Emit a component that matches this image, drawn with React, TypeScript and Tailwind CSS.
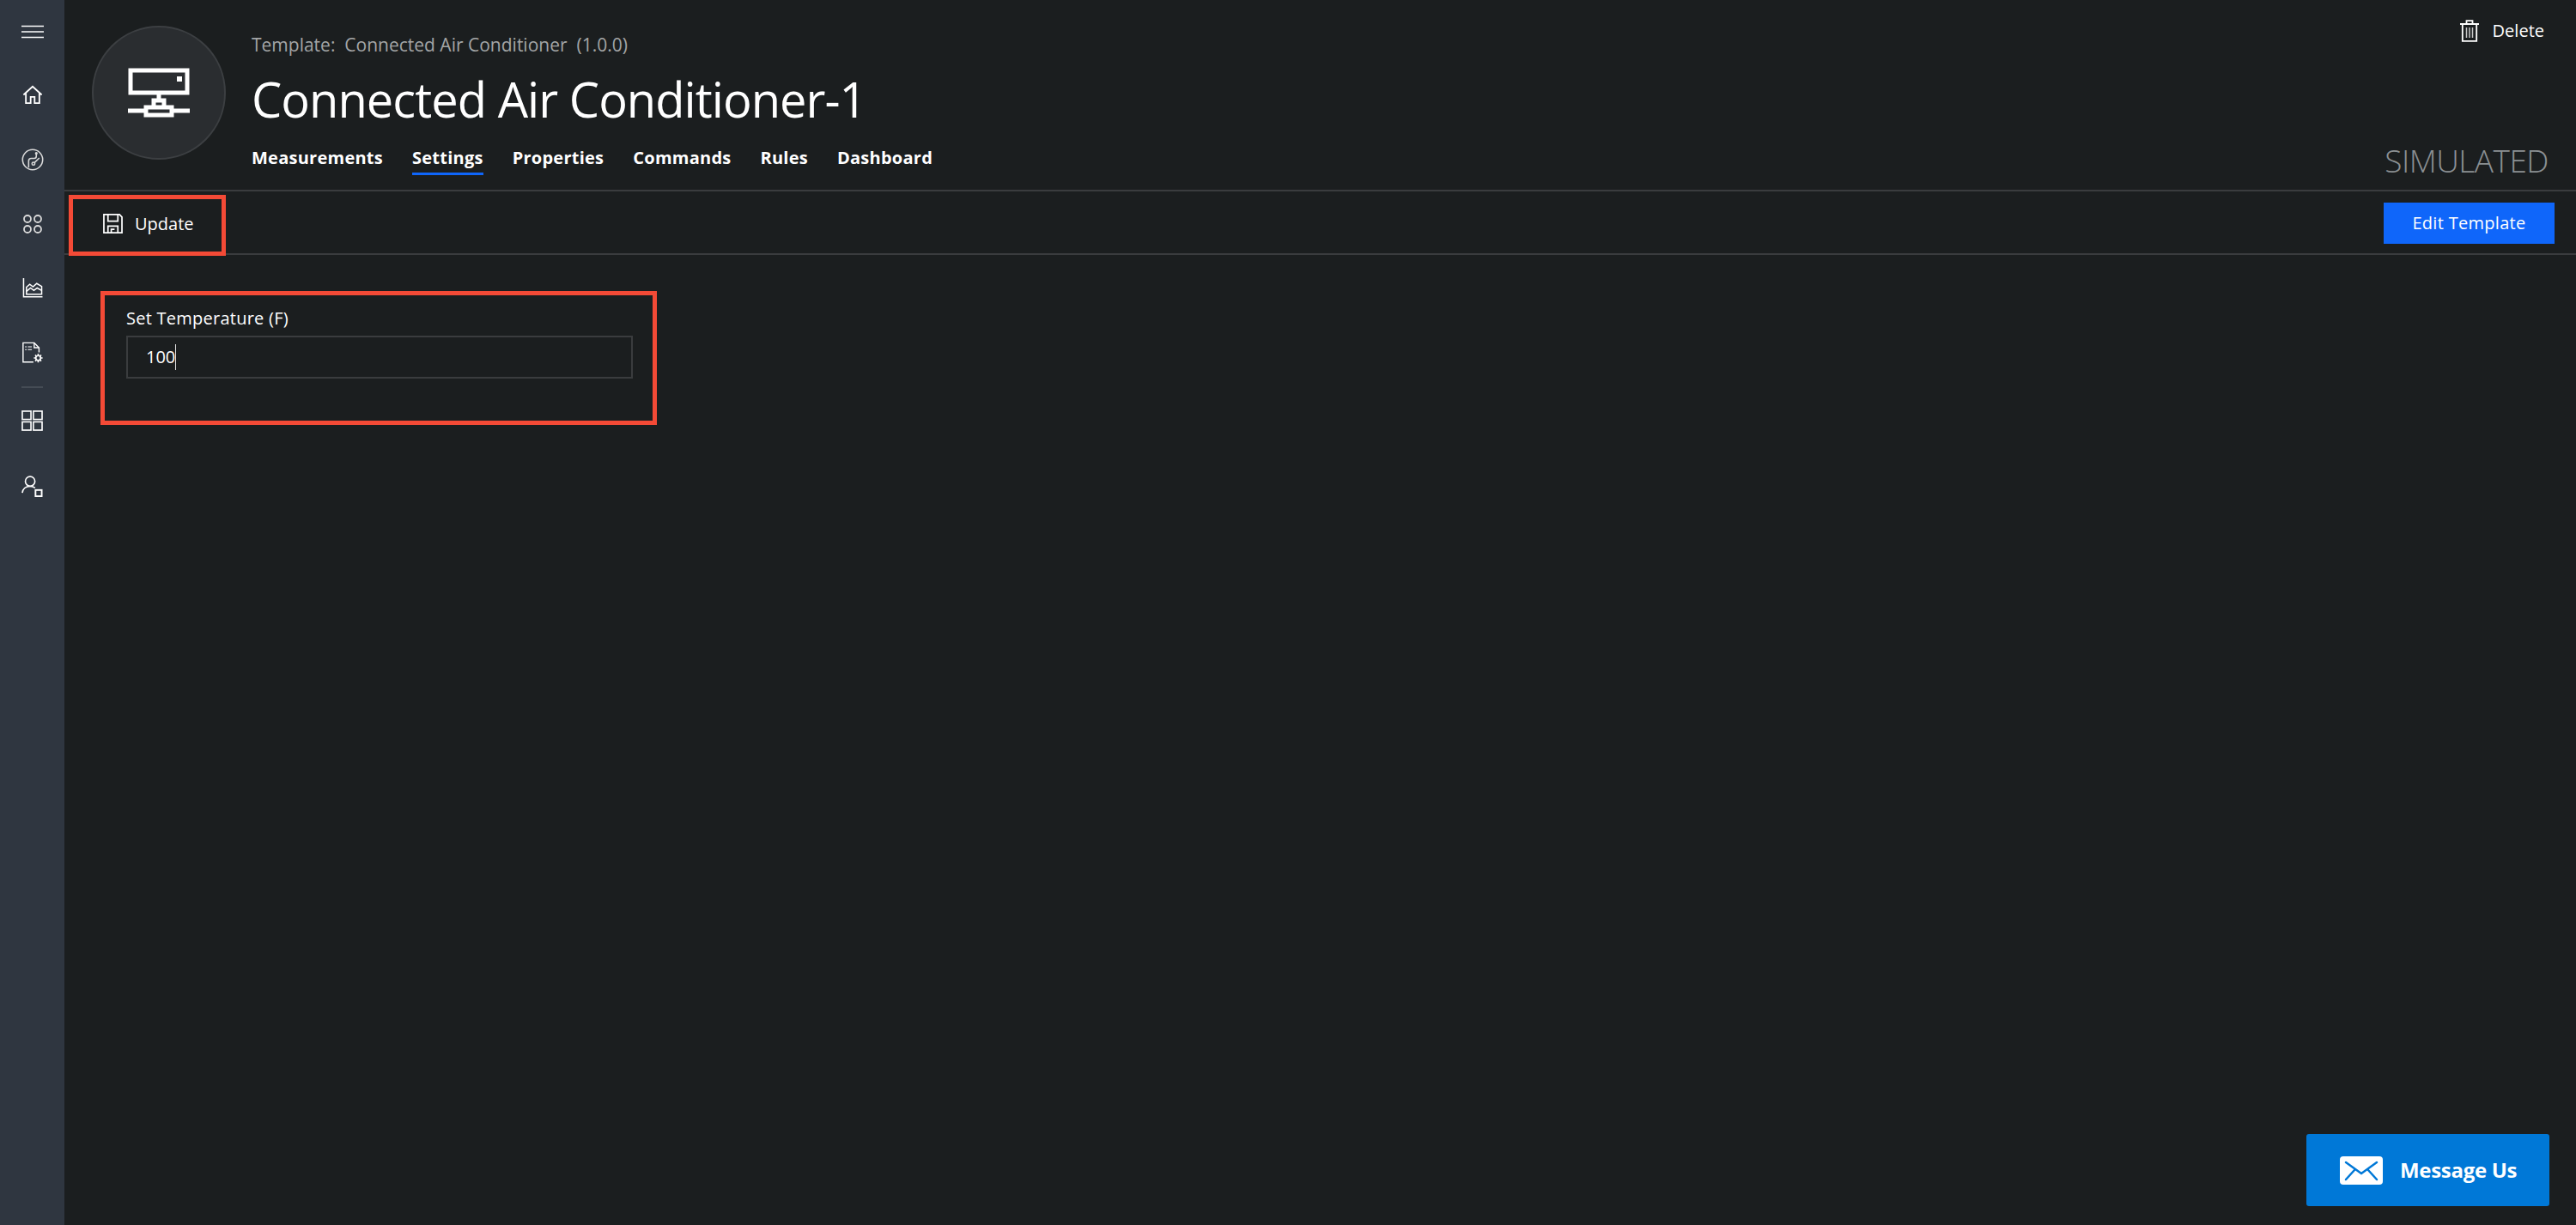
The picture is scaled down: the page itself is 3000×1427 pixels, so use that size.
import React from "react";

function Hamburger() {
  return (
    <svg width="28" height="16" viewBox="0 0 28 16" fill="none" stroke="#fff" strokeWidth="1.6">
      <path d="M1 1.500h26M1 8h26M1 14.500h26" />
    </svg>
  );
}
function HomeIcon() {
  return (
    <svg width="24" height="23" viewBox="0 0 26 24" fill="none" stroke="#fff" strokeWidth="2">
      <path d="M1.500 12 13 1.500 24.500 12M4.500 10v12.500h6v-8h5v8h6V10" />
    </svg>
  );
}
function CircuitIcon() {
  return (
    <svg width="26" height="26" viewBox="0 0 28 28" fill="none" stroke="#d9d9d9" strokeWidth="1.700">
      <circle cx="14" cy="14" r="12.600" />
      <path d="M9 24v-8.500c0-2 1.500-3.200 3.300-3.200H16c1.600 0 2.600-1 2.600-2.600V6" />
      <circle cx="15" cy="19" r="1.800" />
      <path d="m16.400 17.600 6-5.800" />
      <circle cx="18.600" cy="6" r=".9" />
    </svg>
  );
}
function AppsIcon() {
  return (
    <svg width="24" height="24" viewBox="0 0 24 24" fill="none" stroke="#d9d9d9" strokeWidth="1.800">
      <circle cx="6" cy="6" r="4" />
      <circle cx="18" cy="6" r="4" />
      <circle cx="6" cy="18" r="4" />
      <circle cx="18" cy="18" r="4" />
    </svg>
  );
}
function ChartIcon() {
  return (
    <svg width="24" height="23" viewBox="0 0 24 24" fill="none" stroke="#fff" strokeWidth="1.600">
      <path d="M1 0v22.800h23" />
      <path d="M4.500 19.500V11l4-3.500 4 3 4.500-4 6 3.500v9.500z" />
      <path d="m4.500 16 5-4 4 3 4-3 5.500 3" />
    </svg>
  );
}
function DocGearIcon() {
  return (
    <svg width="26" height="26" viewBox="0 0 28 27" fill="none" stroke="#fff" strokeWidth="1.500">
      <path d="M15 25H2V1h14l6 6v6" />
      <path d="M16 1v6h6" />
      <path d="M4.500 6h2M8 6h5M4.500 9.500h2M8 9.500h5" strokeWidth="1.200" />
      <circle cx="21" cy="20" r="3" strokeWidth="1.800" />
      <path d="M21 14.500v2M21 23.500v2M15.500 20h2M24.500 20h2M17.200 16.200l1.400 1.400M23.400 22.400l1.400 1.400M17.200 23.800l1.400-1.400M23.400 17.600l1.400-1.400" strokeWidth="1.800" />
    </svg>
  );
}
function GridIcon() {
  return (
    <svg width="25" height="24" viewBox="0 0 26 25" fill="none" stroke="#fff" strokeWidth="1.700">
      <rect x="1" y="1" width="10.500" height="10" />
      <rect x="14.500" y="1" width="10.500" height="10" />
      <rect x="1" y="14" width="10.500" height="10" />
      <rect x="14.500" y="14" width="10.500" height="10" />
    </svg>
  );
}
function UserIcon() {
  return (
    <svg width="25" height="25" viewBox="0 0 26 26" fill="none" stroke="#fff" strokeWidth="1.700">
      <circle cx="10.500" cy="7" r="5.800" />
      <path d="M1 21c.5-4.500 4-8 9.500-8 2.500 0 4.500.7 6 2" />
      <rect x="17" y="17.500" width="7.500" height="7.500" strokeWidth="2" />
    </svg>
  );
}
function DeviceIcon() {
  return (
    <svg width="72" height="58" viewBox="0 0 72 58" fill="none" stroke="#fff" strokeWidth="5">
      <rect x="3" y="3" width="66" height="26" />
      <rect x="57" y="10" width="6" height="6" fill="#fff" stroke="none" />
      <path d="M36 29v9M30 38h12v8H30zM30 46H21v9h30v-9h-9M0 50h21M51 50h21" />
    </svg>
  );
}
function SaveIcon() {
  return (
    <svg width="23" height="23" viewBox="0 0 24 24" fill="none" stroke="#fff" strokeWidth="1.800">
      <path d="M1 1h19l3 3v19H1z" />
      <path d="M6 1v8h12V1M6 23v-8h12v8" />
      <path d="M10 23v-4h4" />
    </svg>
  );
}
function TrashIcon() {
  return (
    <svg width="22" height="26" viewBox="0 0 22 26" fill="none" stroke="#fff" strokeWidth="1.800">
      <path d="M0 5h22M7.500 5V1.200h7V5M2.800 5v19.800h16.400V5" />
      <path d="M7.500 9v12M11 9v12M14.500 9v12" stroke="#c9c9c9" strokeWidth="1.500" />
    </svg>
  );
}
function MailIcon() {
  return (
    <svg width="50" height="33" viewBox="0 0 50 33" fill="none">
      <rect width="50" height="33" rx="4" fill="#fff" />
      <path d="m7 7 18 13L43 7M7 27l10-11M43 27 33 16" stroke="#0078d7" strokeWidth="2.500" strokeLinecap="round" />
    </svg>
  );
}

const sideTop = [<HomeIcon />, <CircuitIcon />, <AppsIcon />, <ChartIcon />, <DocGearIcon />];

const tabs = ["Measurements", "Settings", "Properties", "Commands", "Rules", "Dashboard"];

export default function App() {
  return (
    <div className="relative flex h-screen w-full overflow-hidden bg-[#1b1e1f] font-['Open_Sans','Noto_Sans',sans-serif] text-white">
      <aside className="flex w-[75px] shrink-0 flex-col items-center bg-[#2f3640]">
        <div className="flex h-[73px] w-full items-center justify-center">
          <Hamburger />
        </div>
        {sideTop.map((icon, i) => (
          <div key={i} className="flex h-[75px] w-full items-center justify-center">
            {icon}
          </div>
        ))}
        <div className="mt-[2px] h-[2px] w-[25px] bg-[#454c55]" />
        <div className="flex h-[76px] w-full items-center justify-center">
          <GridIcon />
        </div>
        <div className="flex h-[76px] w-full items-center justify-center">
          <UserIcon />
        </div>
      </aside>

      <main className="flex min-w-0 flex-1 flex-col">
        <header className="flex h-[223px] border-b-2 border-[#3a3c3e]">
          <div className="ml-[32px] mt-[30px] flex h-[156px] w-[156px] shrink-0 items-center justify-center rounded-full border-2 border-[#3c3f42] bg-[#2a2d30]">
            <DeviceIcon />
          </div>
          <div className="ml-[30px] flex flex-col">
            <div className="mt-[39px] h-[26px] text-[21px] leading-[26px] text-[#a3a5a6] whitespace-pre">
              Template:  Connected Air Conditioner  (1.0.0)
            </div>
            <h1 className="mt-[19px] h-[62px] text-[56px] leading-[62px] font-normal tracking-[-0.95px] whitespace-nowrap">
              Connected Air Conditioner-1
            </h1>
            <nav className="mt-[25px] flex gap-[34px]">
              {tabs.map((t) => (
                <div
                  key={t}
                  className={`h-[33px] border-b-[3px] text-[20px] leading-[26px] font-bold tracking-[0.25px] ${
                    t === "Settings" ? "border-[#0f66fa]" : "border-transparent"
                  }`}
                >
                  {t}
                </div>
              ))}
            </nav>
          </div>
          <div className="ml-auto mr-[32px] flex flex-col items-end">
            <div className="mt-[22px] mr-[5px] flex h-[28px] items-center gap-[16px] text-[20px]">
              <TrashIcon />
              <span>Delete</span>
            </div>
            <div className="mt-[115px] text-[37px] leading-[44px] font-light tracking-[-0.5px] text-[#8b9093]">
              SIMULATED
            </div>
          </div>
        </header>

        <div className="flex h-[74px] items-start justify-between border-b-2 border-[#3a3c3e]">
          <div className="ml-[5px] mt-[4px] flex h-[71px] w-[183px] items-center border-[5px] border-[#f44a36] pb-[4px] pl-[35px]">
            <SaveIcon />
            <span className="ml-[14px] text-[20px]">Update</span>
          </div>
          <div className="mr-[25px] mt-[13px] flex h-[48px] w-[199px] items-center justify-center bg-[#0f66fa] text-[20px] tracking-[0.3px]">
            Edit Template
          </div>
        </div>

        <section className="ml-[42px] mt-[42px] h-[156px] w-[648px] border-[5px] border-[#f44a36] pl-[25px]">
          <label className="mt-[12px] block h-[35px] text-[20px] leading-[30px] tracking-[0.25px]">
            Set Temperature (F)
          </label>
          <div className="flex h-[50px] w-[590px] items-center border-2 border-[#3a3c3e] pl-[21px] text-[20px]">
            100
            <span className="h-[30px] w-[1px] bg-[#e0e0e0]" />
          </div>
        </section>
      </main>

      <div className="absolute left-[2686px] top-[1321px] flex h-[84px] w-[283px] items-center rounded-[3px] bg-[#0078d7] pl-[39px]">
        <MailIcon />
        <span className="ml-[20px] text-[24px] font-bold tracking-[-0.3px]">Message Us</span>
      </div>
    </div>
  );
}
